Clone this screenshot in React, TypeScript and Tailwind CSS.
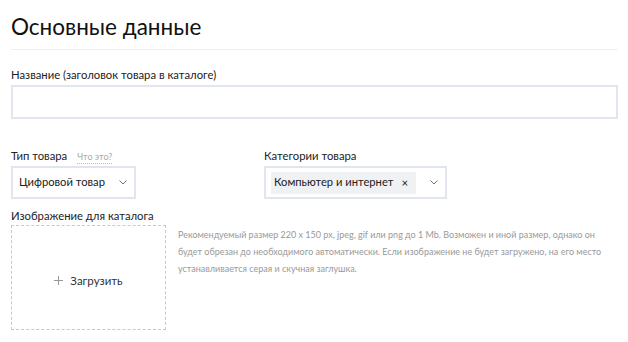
import React from 'react';

const Chevron: React.FC = () => (
  <svg width="8" height="5" viewBox="0 0 8 5" fill="none" className="text-gray-500">
    <path d="M0.5 0.5l3.5 3.5 3.5-3.5" stroke="currentColor" strokeWidth="1" />
  </svg>
);

const App: React.FC = () => {
  return (
    <div className="w-[628px] h-[342px] bg-white overflow-hidden text-[#222] font-['Lato',_'Noto_Sans',_sans-serif]">
      <div className="pl-[11px] pr-[10px] pt-[12px]">
        <h1 className="text-[22.5px] leading-[30px] font-normal text-[#111]">Основные данные</h1>
        <div className="mt-[7px] h-px bg-[#f0f0f0]" />

        <label className="block mt-[17px] text-[11.3px] leading-[16px] text-[#222]">
          Название (заголовок товара в каталоге)
        </label>
        <input
          type="text"
          className="mt-[2px] block w-full h-[34px] border-2 border-[#e0e5ee] bg-white outline-none"
        />

        <div className="mt-[29px] flex gap-[128px]">
          <div className="flex flex-col">
            <div className="flex items-baseline gap-[10px] h-[16px] whitespace-nowrap">
              <span className="text-[11.3px] leading-[16px]">Тип товара</span>
              <span className="text-[9px] leading-[13px] text-[#aaa] border-b border-dotted border-[#bbb]">Что это?</span>
            </div>
            <div className="mt-[2px] w-[125px] h-[33px] border-2 border-[#e0e5ee] flex items-center justify-between pl-[6px] pr-[7px] whitespace-nowrap">
              <span className="text-[11.2px]">Цифровой товар</span>
              <Chevron />
            </div>
          </div>
          <div className="flex flex-col">
            <span className="text-[11.3px] leading-[16px] h-[16px] whitespace-nowrap">Категории товара</span>
            <div className="mt-[2px] w-[183px] h-[33px] border-2 border-[#e0e5ee] flex items-center justify-between pl-[5px] pr-[7px] whitespace-nowrap">
              <span className="h-[22px] w-[145px] bg-[#f0f1f2] flex items-center pl-[3px] text-[11.2px]">
                Компьютер и интернет
                <span className="ml-[8px] text-[11.5px] leading-none">×</span>
              </span>
              <Chevron />
            </div>
          </div>
        </div>

        <div className="mt-[9px] text-[11.3px] leading-[16px]">Изображение для каталога</div>
        <div className="mt-px flex">
          <div className="w-[155px] h-[105px] pt-[6px] border border-dashed border-[#c8c8c8] flex items-center justify-center gap-[7px] text-[11.5px] text-[#333]">
            <svg width="9" height="9" viewBox="0 0 9 9" className="text-[#999]">
              <path d="M4.5 0v9M0 4.5h9" stroke="currentColor" strokeWidth="1" />
            </svg>
            <span>Загрузить</span>
          </div>
          <p className="ml-[12px] mt-px w-[430px] text-[9px] leading-[17px] text-[#999]">
            Рекомендуемый размер 220 х 150 px, jpeg, gif или png до 1 Mb. Возможен и иной размер, однако он будет обрезан до необходимого автоматически. Если изображение не будет загружено, на его место устанавливается серая и скучная заглушка.
          </p>
        </div>
      </div>
    </div>
  );
};

export default App;
